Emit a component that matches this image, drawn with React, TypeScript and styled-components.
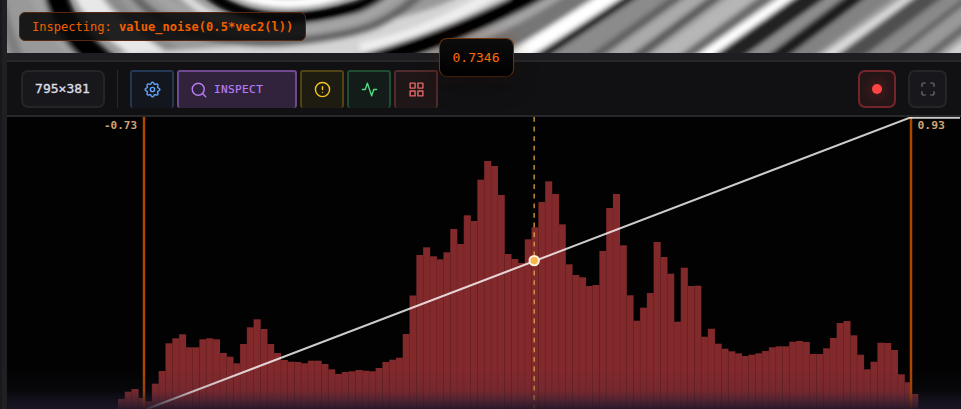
import React from "react";
import styled, { createGlobalStyle } from "styled-components";
import { Search, CircleAlert, Maximize } from "lucide-react";
import { FiActivity, FiGrid } from "react-icons/fi";

const GlobalStyle = createGlobalStyle`
  * {
    box-sizing: border-box;
  }

  body {
    margin: 0;
    background: #1e1e22;
    font-family: "DejaVu Sans Mono", "Liberation Mono", monospace;
  }
`;

const Shell = styled.div`
  display: flex;
  width: 961px;
  height: 409px;
  overflow: hidden;
  background: #1e1e22;
`;

const Gutter = styled.div`
  flex: 0 0 7px;
  background: #202024;
  border-left: 2px solid #19191c;
`;

const Main = styled.main`
  position: relative;
  display: flex;
  flex: 1;
  flex-direction: column;
  min-width: 0;
`;

const Preview = styled.section`
  position: relative;
  height: 53px;
  margin-bottom: 7px;
  overflow: hidden;

  > svg {
    display: block;
  }
`;

const InspectLabel = styled.div`
  position: absolute;
  top: 12px;
  left: 12px;
  display: flex;
  align-items: center;
  width: 287px;
  height: 29px;
  padding-left: 12px;
  border: 1px solid #55290f;
  border-radius: 6px;
  background: rgba(10, 10, 10, 0.9);
  color: #f06000;
  font-size: 12px;
  letter-spacing: 0.03px;
  white-space: pre;
`;

const ValueTip = styled.div`
  position: absolute;
  top: 38px;
  left: 432px;
  display: flex;
  align-items: center;
  justify-content: center;
  width: 75px;
  height: 39px;
  padding-right: 1px;
  border: 1px solid #6a3413;
  border-bottom-color: #3f1e0a;
  border-radius: 8px;
  background: linear-gradient(#0c0c0c, #000);
  box-shadow: 0 8px 24px rgba(0, 0, 0, 0.3), 0 0 18px rgba(255, 102, 0, 0.1);
  color: #ff6a0a;
  font-size: 13px;
`;

const Toolbar = styled.div`
  display: flex;
  align-items: center;
  height: 57px;
  padding: 0 14px;
  border-top: 2px solid #28282b;
  border-bottom: 2px solid #28282b;
  background: #111113;
`;

const SizeBox = styled.div`
  display: flex;
  align-items: center;
  justify-content: center;
  width: 84px;
  height: 38px;
  padding: 0 1px 1px 0;
  border: 2px solid #252529;
  border-radius: 7px;
  background: #18181c;
  color: #dcdce4;
  font-size: 13px;
  -webkit-text-stroke: 0.35px;
`;

const Divider = styled.div`
  width: 1px;
  height: 38px;
  margin: 0 12px;
  background: #29292d;
`;

const Tools = styled.div`
  display: flex;
  gap: 3px;
`;

const ToolButton = styled.button<{
  $color: string;
  $border: string;
  $bg: string;
  $width?: number;
}>`
  display: flex;
  align-items: center;
  justify-content: ${(p) => (p.$width ? "flex-start" : "center")};
  gap: 6px;
  width: ${(p) => p.$width ?? 44}px;
  height: 38px;
  padding: ${(p) => (p.$width ? "0 0 0 11px" : "0")};
  border: 2px solid ${(p) => p.$border};
  border-bottom: 0;
  border-radius: 3px;
  background: ${(p) => p.$bg};
  color: ${(p) => p.$color};
  font-family: inherit;
  font-size: 11px;
  letter-spacing: 0.4px;
  -webkit-text-stroke: 0.2px;
`;

const Actions = styled.div`
  display: flex;
  gap: 12px;
  margin-left: auto;
`;

const ActionButton = styled.button<{ $recording?: boolean }>`
  display: flex;
  align-items: center;
  justify-content: center;
  width: ${(p) => (p.$recording ? 38 : 39)}px;
  height: 38px;
  padding: 0;
  border: 2px solid ${(p) => (p.$recording ? "#74252a" : "#252529")};
  border-radius: 7px;
  background: ${(p) =>
    p.$recording ? "radial-gradient(#421a1c, #241517 62%)" : "#18181c"};
  color: #737379;
`;

const RecordDot = styled.span`
  width: 10px;
  height: 10px;
  margin-top: 1px;
  border-radius: 50%;
  background: #ff4444;
`;

const Chart = styled.section`
  height: 292px;
  background: #020202;

  > svg {
    display: block;
  }
`;

// Eight-lobed cog outline around (12, 12).
const cogPath =
  Array.from({ length: 96 }, (_, i) => {
    const a = (i / 96) * Math.PI * 2;
    const r = 9.1 + 1.25 * Math.cos(8 * a);
    const x = (12 + r * Math.sin(a)).toFixed(2);
    const y = (12 - r * Math.cos(a)).toFixed(2);
    return `${i ? "L" : "M"}${x} ${y}`;
  }).join("") + "Z";

const CogIcon = () => (
  <svg
    width="17"
    height="17"
    viewBox="0 0 24 24"
    fill="none"
    stroke="currentColor"
    strokeWidth="2"
    strokeLinejoin="round"
  >
    <path d={cogPath} />
    <circle cx="12" cy="12" r="3" />
  </svg>
);

// Bands of the noise preview: path, gray level, stroke width.
const bands: [string, string, number][] = [
  ["M-2 -10 C4 20 12 45 24 70", "#7d7d7d", 10],
  ["M33 -14 C42 20 62 44 92 72", "#a2a2a2", 12],
  ["M54 -14 C60 20 76 44 116 72", "#000", 23],
  ["M83 -14 C94 18 128 44 178 66", "#e8e8e8", 24],
  ["M106 -14 C124 18 150 40 200 64", "#8a8a8a", 10],
  ["M120 68 C190 62 290 60 370 40 S462 14 502 -14", "#d4d4d4", 28],
  ["M128 -14 C150 26 220 50 300 41 S390 20 430 -14", "#646464", 8],
  ["M150 -14 C175 20 240 36 300 30 S375 12 408 -14", "#a4a4a4", 9],
  ["M174 -14 C190 4 210 20 250 26", "#ddd", 8],
  ["M204 -12 C226 12 268 24 318 15 S362 6 390 -12", "#000", 12],
  ["M232 -10 C262 6 305 9 354 -10", "#fff", 10],
  ["M360 48 C408 38 460 16 498 -10", "#eee", 10],
  ["M340 70 C410 50 468 30 548 -12", "#050505", 17],
  ["M416 64 C466 46 520 20 570 -10", "#a4a4a4", 11],
  ["M446 64 C506 44 546 20 590 -10", "#767676", 18],
  ["M500 66 C544 40 574 20 621 -10", "#fff", 15],
  ["M528 64 C566 40 602 16 642 -10", "#1c1c1c", 9],
  ["M558 64 C590 42 624 20 668 -10", "#8b8b8b", 22],
  ["M584 64 L687 -10", "#616161", 8],
  ["M606 64 L708 -10", "#aaa", 12],
  ["M627 64 L725 -10", "#5c5c5c", 8],
  ["M654 64 L754 -10", "#b6b6b6", 18],
  ["M676 64 L777 -10", "#6b6b6b", 10],
  ["M695 64 L801 -10", "#fff", 13],
  ["M717 64 L821 -10", "#202020", 18],
  ["M744 64 L847 -10", "#8d8d8d", 11],
  ["M767 64 L865 -10", "#1d1d1d", 13],
  ["M791 64 L890 -10", "#828282", 15],
  ["M816 64 L922 -10", "#dadada", 10],
  ["M839 64 L939 -10", "#505050", 17],
  ["M864 64 L961 -10", "#888", 11],
  ["M883 64 L978 -10", "#686868", 7],
  ["M900 64 L995 -10", "#999", 9],
  ["M918 64 L1012 -10", "#666", 7],
  ["M942 64 L1036 -10", "#d0d0d0", 12],
];

const NoisePreview = () => (
  <svg width="954" height="53" viewBox="7 0 954 53">
    <defs>
      <filter id="soft" x="-5%" y="-40%" width="110%" height="180%">
        <feGaussianBlur stdDeviation="2.6" />
      </filter>
    </defs>
    <rect x="7" width="954" height="53" fill="#999" />
    <g fill="none" filter="url(#soft)">
      {bands.map(([d, stroke, width]) => (
        <path key={d} d={d} stroke={stroke} strokeWidth={width} />
      ))}
    </g>
  </svg>
);

// Top edge of each histogram bin, in window pixels.
const binTops = [
  399, 391.7, 389, 398, 401.3, 383.7, 371, 343.3, 338.3, 334.3, 347.3, 347.3,
  339.3, 338.3, 339.3, 353, 356.7, 363.3, 344, 327.3, 319.3, 329, 344, 353, 360,
  361.7, 362, 363.3, 360.7, 360.7, 364, 369.3, 374, 372, 371.3, 370, 370.7,
  371.3, 368, 362, 359.7, 357.7, 334, 295.5, 255, 247.3, 256.3, 259.3, 252.3,
  229, 244, 215.3, 221, 179.7, 161, 166, 195, 254, 259, 263, 239.3, 227.3, 202,
  181.3, 194, 224.3, 264.3, 275, 277.3, 286, 285, 251, 208, 194, 245.3, 295.3,
  320.7, 307.7, 293, 242, 257, 273.7, 321.7, 267.7, 286, 285.7, 336.7, 328.7,
  343.7, 348.7, 351.3, 353.3, 356, 354.7, 353.3, 351, 347.3, 346.3, 346.3,
  341.7, 341, 342, 354, 354, 348.3, 338, 323, 321, 335.3, 354.7, 369.3, 361.7,
  342.7, 343, 350, 374.3, 382.3, 394,
];

const BIN = 6.78;

const Histogram = () => (
  <svg width="954" height="292" viewBox="7 117 954 292">
    <defs>
      <linearGradient id="glow" x1="0" y1="0" x2="0" y2="1">
        <stop offset="0" stopColor="#28243c" stopOpacity="0" />
        <stop offset="0.55" stopColor="#28243c" stopOpacity="0.15" />
        <stop offset="1" stopColor="#1c1628" stopOpacity="0.88" />
      </linearGradient>
    </defs>
    {binTops.map((top, i) => (
      <g key={i}>
        <rect
          x={118 + i * BIN}
          y={top}
          width={BIN + 0.3}
          height={409 - top}
          fill="#82292c"
        />
        <rect
          x={118 + i * BIN - 0.3}
          y={top}
          width="0.7"
          height={409 - top}
          fill="#4c1517"
          opacity="0.28"
        />
      </g>
    ))}
    <path d="M144 117V409M911 117V409" stroke="#ad4600" strokeWidth="2.5" />
    <path
      d="M147 409L909.5 117.8H960"
      fill="none"
      stroke="#fff"
      strokeOpacity="0.8"
      strokeWidth="2"
    />
    <path
      d="M534.2 117V409"
      stroke="#e0a347"
      strokeOpacity="0.8"
      strokeWidth="1.6"
      strokeDasharray="4.8 4.8"
    />
    <circle cx="534.2" cy="260.6" r="4.7" fill="#f9b550" stroke="#fff0d8" strokeWidth="2" />
    <rect x="7" y="369" width="954" height="40" fill="url(#glow)" />
    <g fill="#d3a273" fontSize="10.5" fontWeight="700">
      <text x="104" y="129" textLength="33" lengthAdjust="spacingAndGlyphs">
        -0.73
      </text>
      <text x="917.5" y="129" textLength="27.5" lengthAdjust="spacingAndGlyphs">
        0.93
      </text>
    </g>
  </svg>
);

export default function App() {
  return (
    <>
      <GlobalStyle />
      <Shell>
        <Gutter />
        <Main>
          <Preview>
            <NoisePreview />
            <InspectLabel>
              Inspecting: <strong>value_noise(0.5*vec2(l))</strong>
            </InspectLabel>
          </Preview>
          <Toolbar>
            <SizeBox>795×381</SizeBox>
            <Divider />
            <Tools>
              <ToolButton $color="#60a5fa" $border="#233853" $bg="#13161d">
                <CogIcon />
              </ToolButton>
              <ToolButton $color="#b87df2" $border="#71498f" $bg="#30233b" $width={120}>
                <Search size={18} strokeWidth={1.9} />
                INSPECT
              </ToolButton>
              <ToolButton $color="#f5c518" $border="#524312" $bg="#1e1b11">
                <CircleAlert size={17} />
              </ToolButton>
              <ToolButton $color="#4ade80" $border="#204c32" $bg="#131c18">
                <FiActivity size={17} />
              </ToolButton>
              <ToolButton $color="#e46767" $border="#512a2d" $bg="#1f1618">
                <FiGrid size={17} />
              </ToolButton>
            </Tools>
            <Actions>
              <ActionButton $recording>
                <RecordDot />
              </ActionButton>
              <ActionButton>
                <Maximize size={16} strokeWidth={1.8} />
              </ActionButton>
            </Actions>
          </Toolbar>
          <Chart>
            <Histogram />
          </Chart>
          <ValueTip>0.7346</ValueTip>
        </Main>
      </Shell>
    </>
  );
}
